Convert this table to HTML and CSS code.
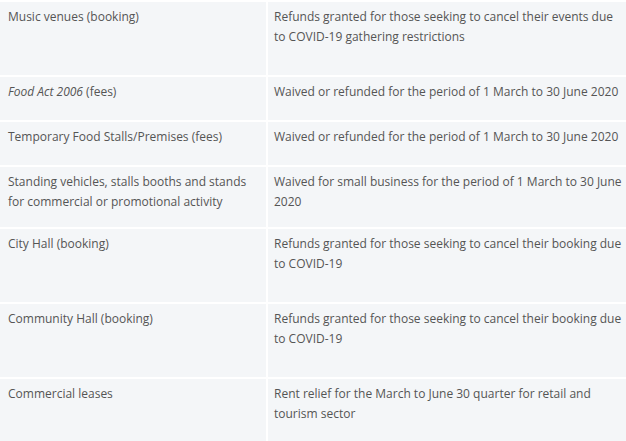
FILE: index.html
```html
<!DOCTYPE html>
<html lang="en">
<head>
<meta charset="utf-8">
<title>COVID-19 fee relief</title>
<link rel="stylesheet" href="styles.css">
</head>
<body>
<table class="relief">
  <tbody>
    <tr class="row row-tall">
      <td class="item">Music venues (booking)</td>
      <td class="detail">Refunds granted for those seeking to cancel their events due to COVID-19 gathering restrictions</td>
    </tr>
    <tr class="row row-short">
      <td class="item"><em>Food Act 2006</em> (fees)</td>
      <td class="detail">Waived or refunded for the period of 1 March to 30 June 2020</td>
    </tr>
    <tr class="row row-short">
      <td class="item">Temporary Food Stalls/Premises (fees)</td>
      <td class="detail">Waived or refunded for the period of 1 March to 30 June 2020</td>
    </tr>
    <tr class="row row-mid">
      <td class="item">Standing vehicles, stalls booths and stands for commercial or promotional activity</td>
      <td class="detail">Waived for small business for the period of 1 March to 30 June 2020</td>
    </tr>
    <tr class="row row-tall">
      <td class="item">City Hall (booking)</td>
      <td class="detail">Refunds granted for those seeking to cancel their booking due to COVID-19</td>
    </tr>
    <tr class="row row-tall">
      <td class="item">Community Hall (booking)</td>
      <td class="detail">Refunds granted for those seeking to cancel their booking due to COVID-19</td>
    </tr>
    <tr class="row row-tall">
      <td class="item">Commercial leases</td>
      <td class="detail">Rent relief for the March to June 30 quarter for retail and tourism sector</td>
    </tr>
  </tbody>
</table>
</body>
</html>
```

FILE: styles.css
```css
html, body {
  margin: 0;
  padding: 0;
  background: #f4f6f8;
}

.relief {
  width: 626px;
  border-collapse: collapse;
  table-layout: fixed;
  font-family: "Open Sans", "Liberation Sans", sans-serif;
  font-size: 12px;
  line-height: 20px;
  color: #555555;
  background: #f4f6f8;
}

.row td {
  vertical-align: top;
  border-top: 2px solid #ffffff;
  padding: 5px 8px 0 8px;
}

.row .item {
  width: 250px;
  border-right: 2px solid #ffffff;
}

.row .detail {
  padding-left: 6px;
  padding-right: 4px;
}

.row-tall {
  height: 75px;
}

.row-short {
  height: 45px;
}

.row-mid {
  height: 62px;
}

em {
  font-style: italic;
}
```
